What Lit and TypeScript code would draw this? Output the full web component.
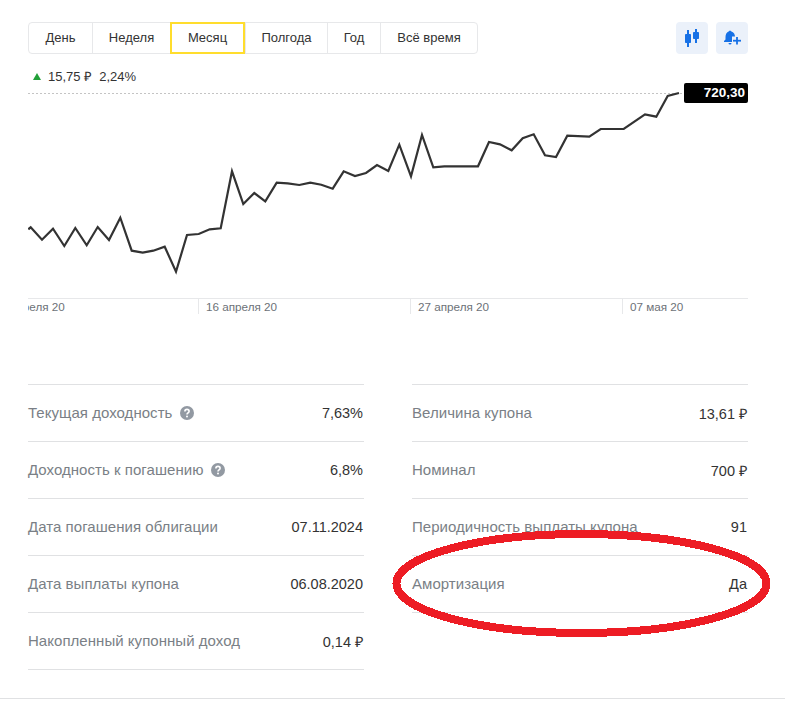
import { LitElement, html, css, svg } from "lit";
import { customElement } from "lit/decorators.js";

const POINTS: [number, number][] = [
  [0.3,229.3],[2.7,227.3],[14,239.7],[25,228.7],[36.3,246],[47.3,228],[58.7,245.3],[69.7,227],[81,240],[92.3,217.7],
  [103.7,250.7],[114.7,252.7],[125.3,250.7],[136.7,246.7],[148,271.7],[159,235],[170.7,234],[181.7,229.3],[192.7,228.3],
  [204,171.3],[215.3,204],[226.3,193],[237.3,201.3],[248.7,182.7],[259.7,183.3],[271.3,185],[282.3,182.7],[293.3,184.7],
  [304.7,188.7],[315.7,171.3],[327,176],[338,173],[349,165],[360.3,171],[371.3,144.7],[383,176.3],[394,135],[405.3,167.3],
  [416.3,166.3],[450,166.3],[461,142],[472,144.3],[483.7,150.3],[494.7,138.3],[505.7,134.3],[517,155.3],[528,157],
  [539.3,135.7],[561.3,136.7],[572.7,129],[595.7,129],[617,114.3],[628.3,116.7],[639.7,96],[651,93],
];

const TABS = ["День", "Неделя", "Месяц", "Полгода", "Год", "Всё время"];
const LEFT = [
  { label: "Текущая доходность", value: "7,63%", help: true },
  { label: "Доходность к погашению", value: "6,8%", help: true },
  { label: "Дата погашения облигации", value: "07.11.2024" },
  { label: "Дата выплаты купона", value: "06.08.2020" },
  { label: "Накопленный купонный доход", value: "0,14 ₽" },
];
const RIGHT = [
  { label: "Величина купона", value: "13,61 ₽" },
  { label: "Номинал", value: "700 ₽" },
  { label: "Периодичность выплаты купона", value: "91" },
  { label: "Амортизация", value: "Да" },
];
const TICKS = [
  { x: 170.5, label: "16 апреля 20" },
  { x: 382.5, label: "27 апреля 20" },
  { x: 594.5, label: "07 мая 20" },
];

@customElement("app-root")
export class AppRoot extends LitElement {
  static styles = css`
    :host {
      display: block;
      position: relative;
      width: 785px;
      height: 705px;
      overflow: hidden;
      background: #fff;
      font-family: "Liberation Sans", Arial, sans-serif;
      color: #333;
    }
    .content { padding: 22px 37px 0 28px; }
    .top { display: flex; justify-content: space-between; }
    .tabs {
      display: flex;
      height: 32px;
      box-sizing: border-box;
      border: 1px solid #e7e8ea;
      border-radius: 4px;
    }
    .tab {
      display: flex;
      align-items: center;
      justify-content: center;
      box-sizing: border-box;
      font-size: 13px;
      color: #333;
      padding-bottom: 1px;
      border-left: 1px solid #e7e8ea;
    }
    .tab:first-child { border-left: 0; }
    .tab.on {
      border: 2px solid #ffdd2d;
      margin: -1px 0;
      height: 32px;
    }
    .actions { display: flex; gap: 8px; }
    .act {
      width: 32px;
      height: 32px;
      border-radius: 4px;
      background: #ebf1fa;
    }
    .act svg { display: block; }
    .change {
      display: flex;
      align-items: center;
      height: 16px;
      margin-top: 14px;
      padding-left: 5px;
      font-size: 13px;
      color: #333;
    }
    .up {
      width: 0; height: 0;
      border-left: 4px solid transparent;
      border-right: 4px solid transparent;
      border-bottom: 7px solid #21a038;
      margin-right: 7px;
    }
    .pct { margin-left: 7px; }
    .chart { position: relative; height: 230px; margin-top: 1px; }
    .chart svg { display: block; }
    .line { fill: none; stroke: #333; stroke-width: 2.2; stroke-linejoin: miter; }
    .dash { stroke: #c4c4c4; stroke-width: 1; stroke-dasharray: 2 2; }
    .axis { stroke: #e7e8ea; stroke-width: 1; }
    .tick { font-size: 11.7px; fill: #6d7278; }
    .badge {
      position: absolute;
      right: 0;
      top: -2px;
      width: 64px;
      height: 20px;
      box-sizing: border-box;
      background: #000;
      color: #fff;
      border-radius: 2px;
      font-size: 13.5px;
      font-weight: 700;
      line-height: 20px;
      text-align: right;
      padding-right: 3px;
    }
    .cols {
      display: grid;
      grid-template-columns: 336px 336px;
      justify-content: space-between;
      margin-top: 69px;
    }
    .col { border-top: 1px solid #e0e1e3; }
    .row {
      height: 57px;
      box-sizing: border-box;
      border-bottom: 1px solid #e0e1e3;
      display: flex;
      align-items: center;
      justify-content: space-between;
      font-size: 15px;
    }
    .label {
      color: #7a7f86;
      display: flex;
      align-items: center;
      gap: 8px;
      letter-spacing: 0.04px;
      padding-bottom: 2px;
    }
    .help { margin-top: 2px; }
    .value { color: #333; font-size: 14.5px; margin-right: 1px; }
    .rule { height: 1px; background: #e0e1e3; margin-top: 28px; }
    .ring { position: absolute; left: 0; top: 0; pointer-events: none; }
    .ring ellipse { fill: none; stroke: #ed1c24; stroke-width: 8; }
  `;

  private renderRow(r: { label: string; value: string; help?: boolean }) {
    return html`<div class="row">
      <span class="label">${r.label}${r.help
        ? html`<svg class="help" width="14" height="14" viewBox="0 0 14 14">
            <circle cx="7" cy="7" r="7" fill="#9299a2"></circle>
            <path d="M4.9 5.4C4.9 4.2 5.8 3.4 7 3.4s2.1.8 2.1 1.9c0 1.6-2.1 1.6-2.1 3.2" fill="none" stroke="#fff" stroke-width="1.6"></path>
            <circle cx="7" cy="10.5" r="1" fill="#fff"></circle>
          </svg>`
        : ""}</span>
      <span class="value">${r.value}</span>
    </div>`;
  }

  render() {
    const widths = [63, 78, 75, 82, 53, 97];
    const pts = POINTS.map((p) => `${p[0]},${p[1] - 85}`).join(" ");
    return html`
      <div class="content">
        <div class="top">
          <div class="tabs">
            ${TABS.map(
              (t, i) => html`<div class="tab ${i === 2 ? "on" : ""}" style="width:${widths[i]}px">${t}</div>`
            )}
          </div>
          <div class="actions">
            <div class="act">
              <svg width="32" height="32" viewBox="0 0 32 32" fill="#1771e6">
                <rect x="11" y="8" width="2" height="17"></rect>
                <rect x="9" y="12" width="6" height="9" rx="0.8"></rect>
                <rect x="19" y="7" width="2" height="14"></rect>
                <rect x="17" y="10" width="6" height="7" rx="0.8"></rect>
              </svg>
            </div>
            <div class="act">
              <svg width="32" height="32" viewBox="0 0 32 32" fill="#1771e6">
                <path d="M13 9.2a1.2 1.2 0 0 1 2 0C18 10 19 12.5 19 15v2.5l1.5 1.5v1H8v-1l1.5-1.5V15c0-2.5 1-5 3.5-5.8z"></path>
                <path d="M12.5 21h3a1.5 1.5 0 0 1-3 0z"></path>
                <rect x="16" y="14.5" width="10" height="8" fill="#ebf1fa"></rect>
                <rect x="17" y="17.8" width="8" height="1.8"></rect>
                <rect x="20.1" y="15" width="1.8" height="7.5"></rect>
              </svg>
            </div>
          </div>
        </div>
        <div class="change">
          <span class="up"></span><span>15,75 ₽</span><span class="pct">2,24%</span>
        </div>
        <div class="chart">
          <svg width="720" height="230" viewBox="0 0 720 230">
            <line class="dash" x1="0" x2="656" y1="8.5" y2="8.5"></line>
            <polyline class="line" points=${pts}></polyline>
            <line class="axis" x1="0" x2="720" y1="213.5" y2="213.5"></line>
            <text class="tick" x="-18" y="226">апреля 20</text>
            ${TICKS.map(
              (t) => svg`
                <line class="axis" x1=${t.x} x2=${t.x} y1="213" y2="229"></line>
                <text class="tick" x=${t.x + 7.5} y="226">${t.label}</text>`
            )}
          </svg>
          <div class="badge">720,30</div>
        </div>
        <div class="cols">
          <div class="col">${LEFT.map((r) => this.renderRow(r))}</div>
          <div class="col">${RIGHT.map((r) => this.renderRow(r))}</div>
        </div>
      </div>
      <div class="rule"></div>
      <svg class="ring" width="785" height="705" shape-rendering="crispEdges">
        <ellipse cx="581.5" cy="583.5" rx="185" ry="49.5"></ellipse>
      </svg>
    `;
  }
}
